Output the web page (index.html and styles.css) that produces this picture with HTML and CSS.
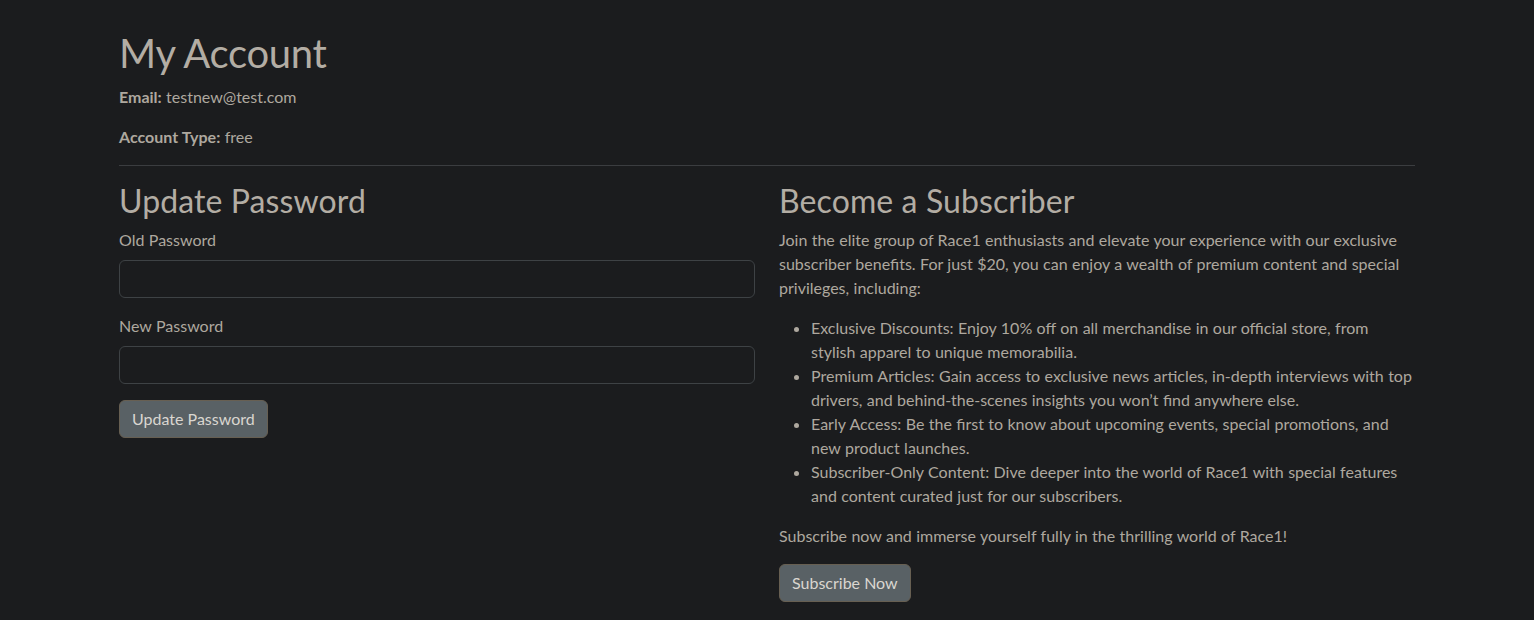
FILE: index.html
```html
<!DOCTYPE html>
<html lang="en">
<head>
<meta charset="utf-8">
<title>My Account</title>
<link rel="stylesheet" href="styles.css">
</head>
<body>
<main class="container">
  <h1 class="title">My Account</h1>
  <p><strong>Email:</strong> testnew@test.com</p>
  <p><strong>Account Type:</strong> free</p>
  <hr class="divider">
  <div class="row">
    <section class="col">
      <h2 class="subtitle">Update Password</h2>
      <form class="pw-form">
        <div class="field">
          <label class="label" for="old">Old Password</label>
          <input class="input" id="old" type="password">
        </div>
        <div class="field">
          <label class="label" for="new">New Password</label>
          <input class="input" id="new" type="password">
        </div>
        <button type="button" class="btn">Update Password</button>
      </form>
    </section>
    <section class="col">
      <h2 class="subtitle">Become a Subscriber</h2>
      <p>Join the elite group of Race1 enthusiasts and elevate your experience with our exclusive subscriber benefits. For just $20, you can enjoy a wealth of premium content and special privileges, including:</p>
      <ul class="benefits">
        <li>Exclusive Discounts: Enjoy 10% off on all merchandise in our official store, from stylish apparel to unique memorabilia.</li>
        <li>Premium Articles: Gain access to exclusive news articles, in-depth interviews with top drivers, and behind-the-scenes insights you won’t find anywhere else.</li>
        <li>Early Access: Be the first to know about upcoming events, special promotions, and new product launches.</li>
        <li>Subscriber-Only Content: Dive deeper into the world of Race1 with special features and content curated just for our subscribers.</li>
      </ul>
      <p>Subscribe now and immerse yourself fully in the thrilling world of Race1!</p>
      <button type="button" class="btn">Subscribe Now</button>
    </section>
  </div>
</main>
</body>
</html>
```
FILE: styles.css
```css
* { box-sizing: border-box; }
html, body { margin: 0; }
body {
  background: #1b1c1e;
  color: #aea89f;
  font-family: Lato, "Noto Sans", sans-serif;
  font-size: 16px;
  line-height: 1.5;
  word-spacing: 0.3px;
}
.container {
  width: 1320px;
  margin: 0 auto;
  padding: 29px 12px 0;
}
p { margin: 0 0 16px; }
strong { font-weight: 700; }
.title {
  font-size: 40px;
  font-weight: 400;
  line-height: 1.2;
  margin: 0 0 8px;
  color: #b3ada4;
  letter-spacing: -0.3px;
  word-spacing: 0;
}
.divider {
  border: 0;
  border-top: 1px solid #3b3d40;
  margin: 16px 0;
}
.row {
  display: flex;
  gap: 24px;
}
.col { flex: 1 1 0; min-width: 0; }
.subtitle {
  font-size: 32px;
  font-weight: 400;
  line-height: 1.2;
  margin: 0 0 8px;
  color: #b3ada4;
  letter-spacing: 0.1px;
  word-spacing: 0;
}
.field { margin-bottom: 16px; }
.label {
  display: block;
  margin-bottom: 8px;
}
.input {
  display: block;
  width: 100%;
  height: 38px;
  background: #1b1c1e;
  border: 1px solid #3e4245;
  border-radius: 6px;
  color: #aea89f;
  font: inherit;
  padding: 6px 12px;
}
.btn {
  display: inline-block;
  height: 38px;
  padding: 6px 12px;
  font: inherit;
  line-height: 24px;
  color: #dad6d0;
  background: #596165;
  border: 1px solid #675f52;
  border-radius: 6px;
}
.benefits {
  margin: 0 0 16px;
  padding-left: 32px;
}
```
